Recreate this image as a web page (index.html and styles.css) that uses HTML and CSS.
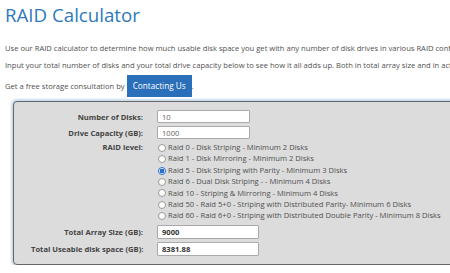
FILE: index.html
```html
<!DOCTYPE html>
<html>
	<head>
		<meta charset="utf-8"/>
		<title>RAID Calculator</title>
		<link rel="stylesheet" href="styles.css">
	</head>
	<body>
		<h1 class="heading-txt">RAID Calculator</h1>
		<p class="intro-txt">Use our RAID calculator to determine how much usable disk space you get with any number of disk drives in various RAID configurations.</p>
		<p class="intro-txt">Input your total number of disks and your total drive capacity below to see how it all adds up. Both in total array size and in actual usable space.</p>
		<p class="contact-line">Get a free storage consultation by <a class="button" href="#">Contacting Us</a>.</p>

		<div class="calc-panel">
			<div class="calc-grid">
				<label class="calc-label" for="disk_count">Number of Disks:</label>
				<input type="text" id="disk_count" class="input-box" value="10"/>

				<label class="calc-label" for="disk_size">Drive Capacity (GB):</label>
				<input type="text" id="disk_size" class="input-box" value="1000"/>

				<span class="calc-label level-label">RAID level:</span>
				<div class="level-list">
					<label class="level-item"><input type="radio" name="raid_level" value="0"/>Raid 0 - Disk Striping - Minimum 2 Disks</label>
					<label class="level-item"><input type="radio" name="raid_level" value="1"/>Raid 1 - Disk Mirroring - Minimum 2 Disks</label>
					<label class="level-item"><input type="radio" name="raid_level" value="5" checked/>Raid 5 - Disk Striping with Parity - Minimum 3 Disks</label>
					<label class="level-item"><input type="radio" name="raid_level" value="6"/>Raid 6 - Dual Disk Striping - - Minimum 4 Disks</label>
					<label class="level-item"><input type="radio" name="raid_level" value="10"/>Raid 10 - Striping &amp; Mirroring - Minimum 4 Disks</label>
					<label class="level-item"><input type="radio" name="raid_level" value="50"/>Raid 50 - Raid 5+0 - Striping with Distributed Parity- Minimum 6 Disks</label>
					<label class="level-item"><input type="radio" name="raid_level" value="60"/>Raid 60 - Raid 6+0 - Striping with Distributed Double Parity - Minimum 8 Disks</label>
				</div>

				<label class="calc-label" for="array_size">Total Array Size (GB):</label>
				<input type="text" id="array_size" class="input-box result-box" value="9000" readonly/>

				<label class="calc-label" for="usable_size">Total Useable disk space (GB):</label>
				<input type="text" id="usable_size" class="input-box result-box" value="8381.88" readonly/>
			</div>
		</div>
	</body>
</html>
```

FILE: styles.css
```css
body{margin: 0px;padding: 0 0 0 5px;font-size: 7.6px;font-family: 'Open Sans', sans-serif;color: #505050;background: #fff;overflow: hidden;}
p{margin: 0px;white-space: nowrap;}
.heading-txt{margin: 2px 0 0;font-size: 18.7px;font-weight: 400;color: #2f78bd;line-height: 26px;}
.intro-txt{margin-top: 14px;line-height: 13px;}
.intro-txt + .intro-txt{margin-top: 4px;}
.contact-line{margin-top: 3px;height: 22px;display: flex;align-items: center;}
.button{display: inline-block;height: 22px;line-height: 22px;padding: 0 6px;margin-left: 2px;background: #2a6fb9;color: #fff;text-decoration: none;font-size: 8.2px;}
.calc-panel{margin: 4px 0 0 8px;width: 520px;background: #dcdcdc;border: 1px solid #666;border-radius: 4px;box-shadow: 0 0 2px 2px #c6dcf0;padding: 8px 0 8px 17px;}
.calc-grid{display: grid;grid-template-columns: 112px auto;column-gap: 14px;row-gap: 3px;align-items: center;}
.calc-label{text-align: right;font-weight: 700;color: #444;font-size: 7.6px;white-space: nowrap;}
.level-label{align-self: start;line-height: 11.4px;}
.input-box{box-sizing: border-box;width: 93px;height: 13px;border: 1px solid #aaa;border-radius: 1px;background: #fff;padding: 0 4px;font-family: 'Open Sans', sans-serif;font-size: 7.6px;color: #666;outline: none;margin: 0;}
.result-box{width: 102px;height: 14px;font-weight: 700;color: #333;}
.level-list{display: flex;flex-direction: column;}
.level-item{display: flex;align-items: center;line-height: 11.4px;white-space: nowrap;}
.level-item input{appearance: none;-webkit-appearance: none;width: 8px;height: 8px;margin: 0 2px 0 1px;border: 1px solid #999;border-radius: 50%;background: #fff;box-sizing: border-box;}
.level-item input:checked{border-color: #2a6fd0;background: radial-gradient(circle, #2a6fd0 0, #2a6fd0 2.2px, #fff 2.6px);}
```
